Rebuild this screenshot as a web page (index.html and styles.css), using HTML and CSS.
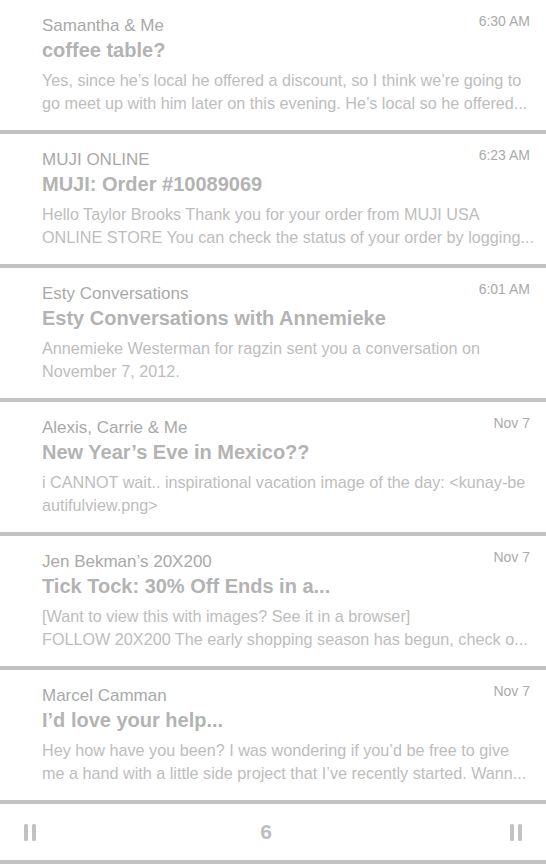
FILE: index.html
```html
<!DOCTYPE html>
<html>
<head>
<meta charset="utf-8">
<link rel="stylesheet" href="styles.css">
</head>
<body>
<div class="list">
  <div class="item">
    <div class="head"><span class="sender">Samantha &amp; Me</span><span class="time">6:30 AM</span></div>
    <div class="subject">coffee table?</div>
    <div class="preview">Yes, since he’s local he offered a discount, so I think we’re going to<br>go meet up with him later on this evening. He’s local so he offered...</div>
  </div>
  <div class="item">
    <div class="head"><span class="sender">MUJI ONLINE</span><span class="time">6:23 AM</span></div>
    <div class="subject">MUJI: Order #10089069</div>
    <div class="preview">Hello Taylor Brooks Thank you for your order from MUJI USA<br>ONLINE STORE You can check the status of your order by logging...</div>
  </div>
  <div class="item">
    <div class="head"><span class="sender">Esty Conversations</span><span class="time">6:01 AM</span></div>
    <div class="subject">Esty Conversations with Annemieke</div>
    <div class="preview">Annemieke Westerman for ragzin sent you a conversation on<br>November 7, 2012.</div>
  </div>
  <div class="item">
    <div class="head"><span class="sender">Alexis, Carrie &amp; Me</span><span class="time">Nov 7</span></div>
    <div class="subject">New Year’s Eve in Mexico??</div>
    <div class="preview">i CANNOT wait.. inspirational vacation image of the day: &lt;kunay-be<br>autifulview.png&gt;</div>
  </div>
  <div class="item">
    <div class="head"><span class="sender">Jen Bekman’s 20X200</span><span class="time">Nov 7</span></div>
    <div class="subject">Tick Tock: 30% Off Ends in a...</div>
    <div class="preview">[Want to view this with images? See it in a browser]<br>FOLLOW 20X200 The early shopping season has begun, check o...</div>
  </div>
  <div class="item">
    <div class="head"><span class="sender">Marcel Camman</span><span class="time">Nov 7</span></div>
    <div class="subject">I’d love your help...</div>
    <div class="preview">Hey how have you been? I was wondering if you’d be free to give<br>me a hand with a little side project that I’ve recently started. Wann...</div>
  </div>
</div>
<div class="toolbar">
  <span class="pause"><i></i><i></i></span>
  <span class="count">6</span>
  <span class="pause"><i></i><i></i></span>
</div>
</body>
</html>
```
FILE: styles.css
```css
html, body {
  margin: 0;
  padding: 0;
  background: #ffffff;
}
body {
  width: 546px;
  height: 864px;
  overflow: hidden;
  font-family: "Liberation Sans", Arial, sans-serif;
}
.item {
  box-sizing: border-box;
  height: 134px;
  padding: 16px 16px 0 42px;
  border-bottom: 4px solid #c3c3c3;
}
.head {
  display: flex;
  justify-content: space-between;
  align-items: flex-start;
  height: 20px;
}
.sender {
  font-size: 17px;
  line-height: 20px;
  color: #a9a9a9;
  white-space: nowrap;
}
.time {
  font-size: 14px;
  line-height: 16px;
  margin-top: -3px;
  color: #aaaaaa;
  white-space: nowrap;
}
.subject {
  margin-top: 2px;
  font-size: 20px;
  line-height: 24px;
  font-weight: bold;
  color: #b3b3b3;
  white-space: nowrap;
}
.preview {
  margin-top: 7px;
  font-size: 16.2px;
  line-height: 23px;
  color: #bdbdbd;
  white-space: nowrap;
}
.toolbar {
  box-sizing: border-box;
  height: 60px;
  border-bottom: 4px solid #c3c3c3;
  display: flex;
  align-items: center;
  justify-content: space-between;
  padding: 0 24px;
}
.pause {
  display: flex;
  gap: 4px;
}
.pause i {
  display: block;
  width: 4px;
  height: 17px;
  border-radius: 1.5px;
  background: #c2c2c2;
}
.count {
  margin-right: 14px;
  font-size: 21px;
  line-height: 24px;
  font-weight: bold;
  color: #bdbdbd;
}
```
